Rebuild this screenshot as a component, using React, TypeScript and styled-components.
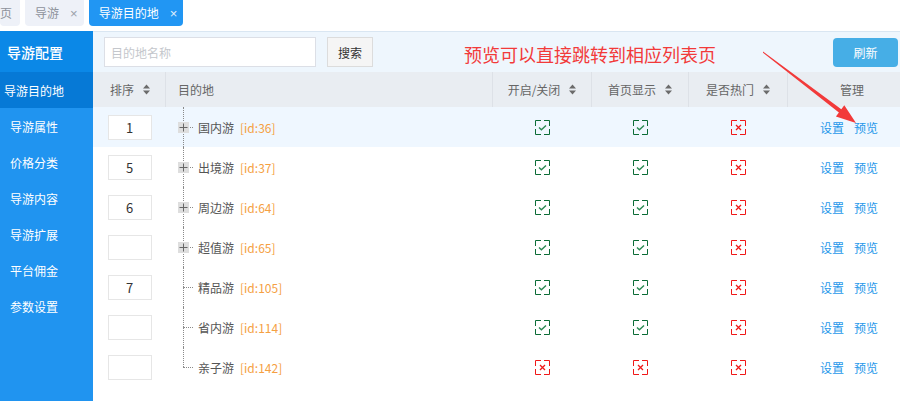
import React from 'react';
import styled, { createGlobalStyle } from 'styled-components';

const Global = createGlobalStyle`
  html, body { margin: 0; padding: 0; background: #fff; }
  body {
    font-family: "Noto Sans CJK SC", "Noto Sans", sans-serif;
    font-size: 12px;
    color: #555;
    overflow: hidden;
  }
  * { box-sizing: border-box; }
`;

const Page = styled.div`
  position: relative;
  width: 900px;
  height: 401px;
  display: flex;
  flex-direction: column;
  overflow: hidden;
`;

const TabBar = styled.div`
  height: 31px;
  flex-shrink: 0;
  display: flex;
  align-items: flex-start;
  gap: 5px;
`;

const Tab = styled.div<{ $active?: boolean; $cut?: boolean }>`
  height: 26px;
  display: flex;
  align-items: center;
  gap: 11px;
  padding: 0 ${(p) => (p.$cut ? '8px' : '6px')} 0 ${(p) => (p.$cut ? '0' : '10px')};
  border-radius: 0 0 4px 4px;
  background: ${(p) => (p.$active ? '#2196f3' : '#eef1f8')};
  color: ${(p) => (p.$active ? '#fff' : '#8d929b')};
  font-size: 12px;
  line-height: 1;
`;

const TabClose = styled.span`
  font-family: "Liberation Sans", Arial, sans-serif;
  font-size: 13px;
  line-height: 1;
  opacity: 0.85;
`;

const Body = styled.div`
  flex: 1;
  display: flex;
  min-height: 0;
`;

const Sidebar = styled.nav`
  width: 93px;
  flex-shrink: 0;
  background: #2094f0;
  color: #fff;
  display: flex;
  flex-direction: column;
`;

const SideHeader = styled.div`
  height: 41px;
  display: flex;
  align-items: center;
  padding-left: 7px;
  background: #0b88e7;
  font-size: 14px;
  font-weight: 500;
`;

const SideItem = styled.div<{ $active?: boolean }>`
  height: 36px;
  display: flex;
  align-items: center;
  padding-left: ${(p) => (p.$active ? '4px' : '10px')};
  background: ${(p) => (p.$active ? '#0679d6' : 'transparent')};
  font-size: 12px;
`;

const Main = styled.main`
  flex: 1;
  min-width: 0;
  display: flex;
  flex-direction: column;
  overflow: hidden;
`;

const Toolbar = styled.div`
  height: 41px;
  flex-shrink: 0;
  border-top: 1px solid #d9e6f2;
  background: #eef6fd;
  display: flex;
  align-items: center;
  gap: 11px;
  padding: 0 2px 0 11px;
`;

const SearchInput = styled.input`
  width: 212px;
  height: 30px;
  border: 1px solid #dcdfe6;
  background: #fff;
  padding: 0 6px;
  font-family: inherit;
  font-size: 12px;
  outline: none;
  &::placeholder { color: #c4c7cc; }
`;

const PlainButton = styled.button`
  width: 46px;
  height: 30px;
  background: #f5f5f5;
  border: 1px solid #dcdcdc;
  color: #333;
  font-family: inherit;
  font-size: 12px;
  padding: 0;
`;

const RefreshButton = styled.button`
  margin-left: auto;
  width: 65px;
  height: 29px;
  background: #46aee6;
  border: none;
  border-radius: 4px;
  color: #fff;
  font-family: inherit;
  font-size: 12px;
  padding: 0;
`;

const COLS = '73px 327px 99px 97px 99px 128px';

const HeadRow = styled.div`
  display: grid;
  grid-template-columns: ${COLS};
  width: 823px;
  height: 35px;
  flex-shrink: 0;
  background: #e9edf2;
`;

const HeadCell = styled.div<{ $align?: 'left' | 'center'; $pad?: number; $last?: boolean }>`
  display: flex;
  align-items: center;
  justify-content: ${(p) => (p.$align === 'left' ? 'flex-start' : 'center')};
  padding-left: ${(p) => (p.$pad ?? 0)}px;
  gap: 9px;
  border-right: ${(p) => (p.$last ? 'none' : '1px solid #dde1e7')};
  color: #666;
  font-size: 12px;
`;

const Row = styled.div<{ $hl?: boolean }>`
  display: grid;
  grid-template-columns: ${COLS};
  width: 823px;
  height: 40px;
  flex-shrink: 0;
  background: ${(p) => (p.$hl ? '#eff7ff' : '#fff')};
`;

const Cell = styled.div`
  display: flex;
  align-items: center;
  justify-content: center;
`;

const SortInput = styled.input`
  width: 44px;
  height: 25px;
  border: 1px solid #e6e6e6;
  background: #fff;
  text-align: center;
  font-family: inherit;
  font-size: 13px;
  color: #333;
  padding: 0;
  outline: none;
`;

const TreeCell = styled.div`
  display: flex;
  align-items: stretch;
  padding-left: 12px;
`;

const Guide = styled.div<{ $last?: boolean }>`
  position: relative;
  width: 20px;
  flex-shrink: 0;
  &::before {
    content: '';
    position: absolute;
    left: 5px;
    top: 0;
    bottom: ${(p) => (p.$last ? '50%' : '0')};
    border-left: 1px dotted #8a8a8a;
  }
  &::after {
    content: '';
    position: absolute;
    left: 5px;
    width: 10px;
    top: 50%;
    border-top: 1px dotted #8a8a8a;
  }
`;

const Toggle = styled.span`
  position: absolute;
  left: 0;
  top: 50%;
  margin-top: -5px;
  width: 11px;
  height: 11px;
  background: #dedede;
  z-index: 1;
  display: flex;
  align-items: center;
  justify-content: center;
`;

const NameWrap = styled.div`
  display: flex;
  align-items: center;
  gap: 6px;
  font-size: 12px;
  color: #555;
`;

const IdTag = styled.span`
  color: #f5a042;
`;

const Actions = styled.div`
  display: flex;
  align-items: center;
  justify-content: center;
  gap: 10px;
  padding-right: 6px;
`;

const Link = styled.a`
  color: #1f98ea;
  font-size: 12px;
  text-decoration: none;
`;

const Annotation = styled.div`
  position: absolute;
  left: 464px;
  top: 42px;
  font-size: 18px;
  line-height: 24px;
  color: #f23a3a;
  white-space: nowrap;
`;

const ArrowLayer = styled.svg`
  position: absolute;
  left: 0;
  top: 0;
  pointer-events: none;
`;

const SortIcon = () => (
  <svg width="7" height="11" viewBox="0 0 7 11">
    <path d="M0 4.5 L3.5 0.5 L7 4.5 Z M0 6.5 L3.5 10.5 L7 6.5 Z" fill="#6b6b6b" />
  </svg>
);

const PlusIcon = () => (
  <svg width="9" height="9" viewBox="0 0 9 9">
    <path d="M0.5 4.5 H8.5 M4.5 0.5 V8.5" stroke="#666" strokeWidth="1" />
  </svg>
);

const Flag = ({ on }: { on: boolean }) => {
  const c = on ? '#0b6c36' : '#f01818';
  return (
    <svg width="15" height="15" viewBox="0 0 15 15">
      <rect x="0.5" y="0.5" width="14" height="14" fill="none" stroke={c} strokeWidth="1" strokeDasharray="5.5 3 5.5 0" />
      {on ? (
        <path d="M4 7.6 L6.4 9.8 L11 5.4" fill="none" stroke="#2a8a52" strokeWidth="1.4" />
      ) : (
        <path d="M5 5 L10 10 M10 5 L5 10" fill="none" stroke="#f01818" strokeWidth="1.3" />
      )}
    </svg>
  );
};

type Item = { sort: string; name: string; id: number; kids: boolean; flags: [boolean, boolean, boolean] };

const items: Item[] = [
  { sort: '1', name: '国内游', id: 36, kids: true, flags: [true, true, false] },
  { sort: '5', name: '出境游', id: 37, kids: true, flags: [true, true, false] },
  { sort: '6', name: '周边游', id: 64, kids: true, flags: [true, true, false] },
  { sort: '', name: '超值游', id: 65, kids: true, flags: [true, true, false] },
  { sort: '7', name: '精品游', id: 105, kids: false, flags: [true, true, false] },
  { sort: '', name: '省内游', id: 114, kids: false, flags: [true, true, false] },
  { sort: '', name: '亲子游', id: 142, kids: false, flags: [false, false, false] },
];

const menu = ['导游属性', '价格分类', '导游内容', '导游扩展', '平台佣金', '参数设置'];

export default function App() {
  return (
    <Page>
      <Global />
      <TabBar>
        <Tab $cut>页</Tab>
        <Tab>
          导游<TabClose>×</TabClose>
        </Tab>
        <Tab $active>
          导游目的地<TabClose>×</TabClose>
        </Tab>
      </TabBar>
      <Body>
        <Sidebar>
          <SideHeader>导游配置</SideHeader>
          <SideItem $active>导游目的地</SideItem>
          {menu.map((m) => (
            <SideItem key={m}>{m}</SideItem>
          ))}
        </Sidebar>
        <Main>
          <Toolbar>
            <SearchInput placeholder="目的地名称" />
            <PlainButton>搜索</PlainButton>
            <RefreshButton>刷新</RefreshButton>
          </Toolbar>
          <HeadRow>
            <HeadCell $align="left" $pad={17}>
              排序 <SortIcon />
            </HeadCell>
            <HeadCell $align="left" $pad={12}>目的地</HeadCell>
            <HeadCell>
              开启/关闭 <SortIcon />
            </HeadCell>
            <HeadCell>
              首页显示 <SortIcon />
            </HeadCell>
            <HeadCell>
              是否热门 <SortIcon />
            </HeadCell>
            <HeadCell $last>管理</HeadCell>
          </HeadRow>
          {items.map((it, i) => (
            <Row key={it.id} $hl={i === 0}>
              <Cell>
                <SortInput readOnly value={it.sort} />
              </Cell>
              <TreeCell>
                <Guide $last={i === items.length - 1}>
                  {it.kids && (
                    <Toggle>
                      <PlusIcon />
                    </Toggle>
                  )}
                </Guide>
                <NameWrap>
                  <span>{it.name}</span>
                  <IdTag>[id:{it.id}]</IdTag>
                </NameWrap>
              </TreeCell>
              {it.flags.map((f, k) => (
                <Cell key={k}>
                  <Flag on={f} />
                </Cell>
              ))}
              <Actions>
                <Link>设置</Link>
                <Link>预览</Link>
              </Actions>
            </Row>
          ))}
        </Main>
      </Body>
      <Annotation>预览可以直接跳转到相应列表页</Annotation>
      <ArrowLayer width="900" height="401" viewBox="0 0 900 401">
        <polygon
          points="763,51.5 841.3,109.3 844.3,105.3 856,123 835.9,116.5 838.9,112.5 763,52.8"
          fill="#f23a3a"
        />
      </ArrowLayer>
    </Page>
  );
}
